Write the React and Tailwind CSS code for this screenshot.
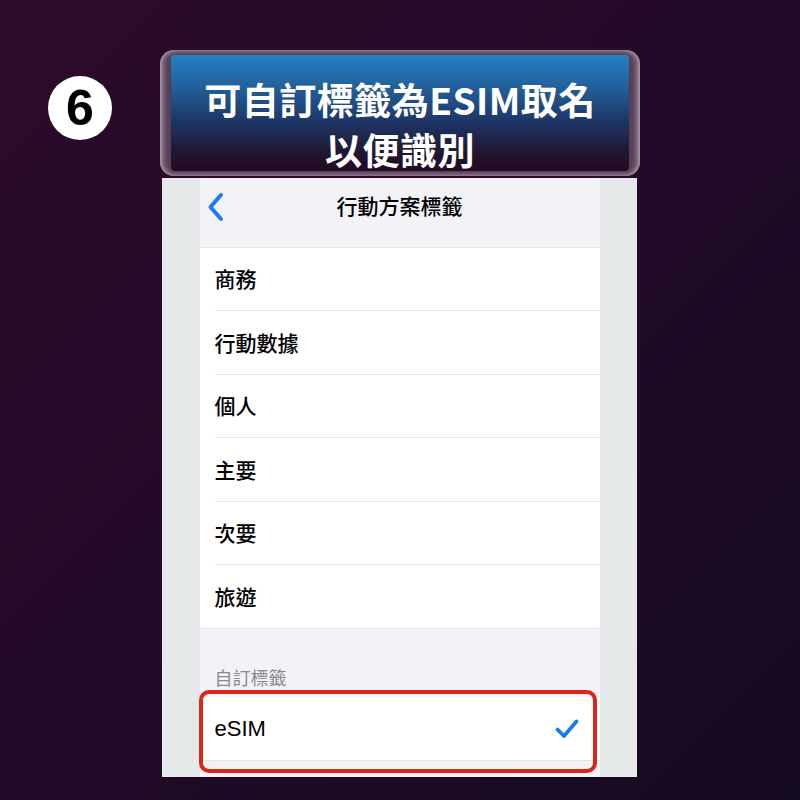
import React from "react";

const rows = ["商務", "行動數據", "個人", "主要", "次要", "旅遊"];

export default function App() {
  return (
    <div
      className="w-[800px] h-[800px] relative overflow-hidden bg-[linear-gradient(135deg,#2d0a2a_0%,#220a28_50%,#140a20_100%)]"
      style={{ fontFamily: '"Noto Sans CJK TC", "Noto Sans", sans-serif' }}
    >
      <div className="flex pt-[50px]">
        <div className="w-[160px] flex justify-end pr-[48px] pt-[26px]">
          <div className="w-[64px] h-[64px] rounded-full bg-white flex items-center justify-center">
            <span
              className="text-[50px] font-bold text-black leading-none"
              style={{ fontFamily: '"Liberation Sans", sans-serif' }}
            >
              6
            </span>
          </div>
        </div>
        <div className="flex flex-col">
          <div className="w-[480px] h-[126px] rounded-[14px] bg-[#6e5a6e] p-[5px_11px_5px_11px] shadow-[inset_0_0_4px_2px_rgba(200,185,200,0.8)]">
            <div className="w-full h-full rounded-[4px] bg-[linear-gradient(180deg,#2582c6_0%,#235c96_30%,#1e3566_58%,#22152f_85%,#230a24_100%)] shadow-[0_0_8px_4px_rgba(60,30,60,0.6)] flex flex-col items-center justify-start pt-[19px] text-white font-bold text-[37px] leading-[50px] tracking-[0.5px]">
              <div>可自訂標籤為ESIM取名</div>
              <div>以便識別</div>
            </div>
          </div>
          <div className="ml-[2px] mt-[2px] w-[475px] h-[599px] bg-[#e6e9ea] flex justify-center relative">
            <div className="w-[400px] h-full bg-[#f2f2f7] flex flex-col pt-[3px]">
              <div className="h-[66px] relative flex items-center justify-center">
                <svg
                  className="absolute left-[6px] top-[11px]"
                  width="20"
                  height="30"
                  viewBox="0 0 20 30"
                  fill="none"
                >
                  <path
                    d="M15 3 L4.5 15 L15 27"
                    stroke="#1a7cf0"
                    strokeWidth="4"
                    strokeLinecap="round"
                    strokeLinejoin="round"
                  />
                </svg>
                <span className="text-[21px] text-black font-medium -mt-[16px]">
                  行動方案標籤
                </span>
              </div>
              <div className="bg-white border-t border-[#e8e8ec] border-b">
                {rows.map((r, i) => (
                  <div key={r} className="pl-[15px] h-[63.4px]">
                    <div
                      className={
                        "h-full flex items-center text-[21px] text-black font-medium " +
                        (i < rows.length - 1 ? "border-b border-[#e6e6ea]" : "")
                      }
                    >
                      {r}
                    </div>
                  </div>
                ))}
              </div>
              <div className="pl-[15px] pt-[35px] h-[68px] text-[18px] text-[#8a8a8e]">
                自訂標籤
              </div>
              <div className="bg-white h-[64px] pl-[15px] pr-[20px] flex items-center justify-between border-b border-[#e4e4e8]">
                <span
                  className="text-[22px] text-black font-medium"
                  style={{ fontFamily: '"Liberation Sans", sans-serif' }}
                >
                  eSIM
                </span>
                <svg width="26" height="22" viewBox="0 0 26 22" fill="none">
                  <path
                    d="M3.5 11.5 L10 18 L22.5 3.5"
                    stroke="#1a7cf0"
                    strokeWidth="3.8"
                    strokeLinecap="round"
                    strokeLinejoin="round"
                  />
                </svg>
              </div>
            </div>
            <div className="absolute left-[37px] top-[512px] w-[398px] h-[83px] rounded-[10px] border-[4px] border-[#d9281a]" />
          </div>
        </div>
      </div>
    </div>
  );
}
